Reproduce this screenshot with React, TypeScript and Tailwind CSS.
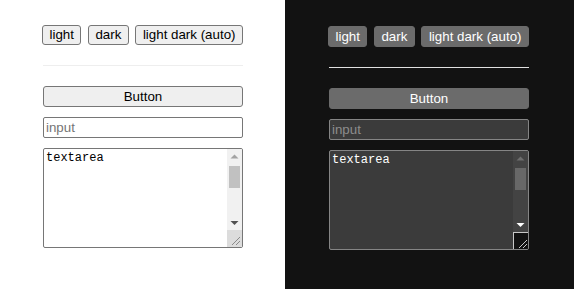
import React from "react";

function Tri({ up, color }: { up: boolean; color: string }) {
  return (
    <svg width="15" height="15" viewBox="0 0 15 15" className="block">
      {up ? (
        <polygon points="3.5,9.5 11.5,9.5 7.5,5.5" fill={color} />
      ) : (
        <polygon points="3.5,6 11.5,6 7.5,10" fill={color} />
      )}
    </svg>
  );
}

function Grip({ color }: { color: string }) {
  return (
    <svg width="15" height="17" viewBox="0 0 15 17" className="block">
      <line x1="13" y1="7" x2="5" y2="15" stroke={color} strokeWidth="1" />
      <line x1="13" y1="11" x2="9" y2="15" stroke={color} strokeWidth="1" />
    </svg>
  );
}

function Panel({ dark }: { dark: boolean }) {
  const btn = dark
    ? "px-[6.5px] rounded-[3px] border border-[#6b6b6b] bg-[#6b6b6b] text-white"
    : "px-[6.5px] rounded-[3px] border border-[#767676] bg-[#efefef] text-black";
  const field = dark
    ? "border-[#858585] bg-[#3b3b3b] text-white placeholder:text-[#8d8d8d]"
    : "border-[#767676] bg-white text-black placeholder:text-[#757575]";
  return (
    <div
      className={
        dark
          ? "flex-1 bg-[#121212] pl-[44px] pt-[26px] [color-scheme:dark]"
          : "w-[285px] bg-white pl-[43px] pt-[25px] [color-scheme:light]"
      }
      style={{ fontFamily: '"Liberation Sans", Arial, sans-serif' }}
    >
      <div className="flex -ml-px gap-[6.5px] text-[13.333px] leading-[16px]">
        <button className={(dark ? "h-[21px] " : "h-[20px] ") + btn}>light</button>
        <button className={(dark ? "h-[21px] " : "h-[20px] ") + btn}>dark</button>
        <button className={(dark ? "h-[21px] " : "h-[20px] ") + btn}>light dark (auto)</button>
      </div>
      <div className={dark ? "mt-[20px] w-[200px] h-px bg-[#e0e0e0]" : "mt-[20px] w-[200px] h-px bg-[#eeeeee]"} />
      <button className={"mt-[20px] h-[21px] w-[200px] block text-[13.333px] leading-[16px] " + btn}>Button</button>
      <input
        placeholder="input"
        className={"mt-[10px] block w-[200px] h-[21px] px-[2px] rounded-[2px] border text-[13.333px] outline-none " + field}
      />
      <div className={"relative mt-[10px] w-[200px] h-[100px] rounded-[2px] border overflow-hidden " + field}>
        <textarea
          defaultValue="textarea"
          className="block w-full h-full pl-[2px] pt-[2px] pr-[17px] bg-transparent text-[12px] leading-[15px] outline-none resize-none overflow-hidden"
          style={{ fontFamily: '"Liberation Mono", "DejaVu Sans Mono", monospace' }}
        />
        <div
          className={
            "absolute right-0 top-0 bottom-0 w-[15px] flex flex-col " +
            (dark ? "bg-[#434343]" : "bg-[#f1f1f1]")
          }
        >
          <Tri up color={dark ? "#6e6e6e" : "#a3a3a3"} />
          <div className="flex-1 pt-[2px]">
            <div className={"mx-[2px] h-[22px] " + (dark ? "bg-[#686868]" : "bg-[#c1c1c1]")} />
          </div>
          <Tri up={false} color={dark ? "#ffffff" : "#505050"} />
          <div
            className={
              dark
                ? "h-[17px] bg-[#121212] border-t border-l border-[#c8c8c8]"
                : "h-[17px] bg-[#dcdcdc]"
            }
          >
            <Grip color={dark ? "#c8c8c8" : "#8a8a8a"} />
          </div>
        </div>
      </div>
    </div>
  );
}

export default function App() {
  return (
    <div className="flex w-[574px] h-[289px]">
      <Panel dark={false} />
      <Panel dark={true} />
    </div>
  );
}
